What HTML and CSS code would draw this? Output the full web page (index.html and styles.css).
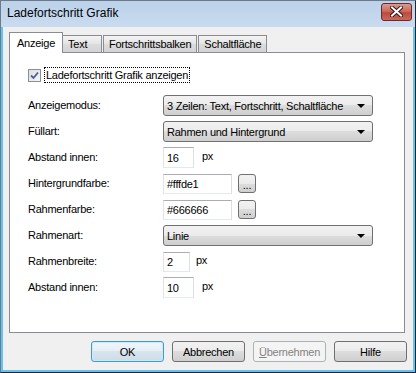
FILE: index.html
```html
<!DOCTYPE html>
<html lang="de">
  <head>
    <meta charset="UTF-8" />
    <title>Ladefortschritt Grafik</title>
    <link rel="stylesheet" href="styles.css">
  </head>
  <body>
    <div class="window">
      <!-- Title bar -->
      <div class="titlebar">
        <span class="title">Ladefortschritt Grafik</span>
        <div class="close-btn">
          <svg width="13" height="11" viewBox="0 0 13 11">
            <path d="M2 1.5 L11 9.5 M11 1.5 L2 9.5" stroke="#3b1518" stroke-width="4" stroke-linecap="square" />
            <path d="M2 1.5 L11 9.5 M11 1.5 L2 9.5" stroke="#ffffff" stroke-width="2" stroke-linecap="square" />
          </svg>
        </div>
      </div>

      <div class="frame">
        <div class="client">
          <div class="tabs">
            <div class="tab active">Anzeige</div>
            <div class="tab tab-short">Text</div>
            <div class="tab">Fortschrittsbalken</div>
            <div class="tab">Schaltfläche</div>
          </div>

          <div class="panel">
            <div class="check-row">
              <span class="checkbox">
                <svg width="9" height="9" viewBox="0 0 9 9">
                  <path d="M1 4.5 L3.5 7 L8 1.5" fill="none" stroke="#4a5f97" stroke-width="1.8" />
                </svg>
              </span>
              <span class="focus-label">Ladefortschritt Grafik anzeigen</span>
            </div>

            <div class="form">
              <label>Anzeigemodus:</label>
              <div class="combo">3 Zeilen: Text, Fortschritt, Schaltfläche<span class="arrow"></span></div>

              <label>Füllart:</label>
              <div class="combo">Rahmen und Hintergrund<span class="arrow"></span></div>

              <label>Abstand innen:</label>
              <div class="field">
                <div class="textbox num">16</div>
                <span class="unit">px</span>
              </div>

              <label>Hintergrundfarbe:</label>
              <div class="field">
                <div class="textbox color">#fffde1</div>
                <div class="dots-btn">...</div>
              </div>

              <label>Rahmenfarbe:</label>
              <div class="field">
                <div class="textbox color">#666666</div>
                <div class="dots-btn">...</div>
              </div>

              <label>Rahmenart:</label>
              <div class="combo">Linie<span class="arrow"></span></div>

              <label>Rahmenbreite:</label>
              <div class="field">
                <div class="textbox small">2</div>
                <span class="unit">px</span>
              </div>

              <label>Abstand innen:</label>
              <div class="field">
                <div class="textbox num">10</div>
                <span class="unit">px</span>
              </div>
            </div>
          </div>

          <!-- Dialog buttons -->
          <div class="buttons">
            <div class="btn default">OK</div>
            <div class="btn">Abbrechen</div>
            <div class="btn disabled"><u>Ü</u>bernehmen</div>
            <div class="btn">Hilfe</div>
          </div>
        </div>
      </div>
    </div>
  </body>
</html>
```

FILE: styles.css
```css
/* General styles */
html,
body {
  margin: 0;
  padding: 0;
  background: #ffffff;
  font-family: "Liberation Sans", Arial, sans-serif;
  font-size: 11px;
  letter-spacing: -0.25px;
  color: #000;
}

/* Window frame */
.window {
  width: 416px;
  height: 373px;
  box-sizing: border-box;
  border: 1px solid #1f2833;
  border-top-color: #6d7a8a;
  border-left-color: #6d7a8a;
  display: flex;
  flex-direction: column;
}
.titlebar {
  height: 26px;
  flex-shrink: 0;
  background: linear-gradient(#bcd2ea, #c9dbef);
  display: flex;
  align-items: center;
  justify-content: space-between;
  padding: 0 3px 0 6px;
}
.title {
  font-size: 12px;
  letter-spacing: 0;
  margin-top: -2px;
}
.close-btn {
  width: 29px;
  height: 16px;
  margin-top: -5px;
  border: 1px solid #6b2a2f;
  border-radius: 3px;
  background: linear-gradient(#dc9a8c, #cc6b5c 45%, #bd4a3c 55%, #c9695a);
  display: flex;
  align-items: center;
  justify-content: center;
}
.frame {
  flex: 1;
  background: #63c2ee;
  padding: 0 2px 2px 2px;
  display: flex;
}
.client {
  flex: 1;
  background: #f0f0f0;
  padding: 5px 6px 7px 6px;
  display: flex;
  flex-direction: column;
}

/* Tabs */
.tabs {
  display: flex;
  align-items: flex-end;
  height: 20px;
  position: relative;
  z-index: 1;
}
.tab {
  height: 17px;
  box-sizing: border-box;
  padding: 1px 5px 0 5px;
  line-height: 14px;
  border: 1px solid #898c95;
  border-bottom: none;
  background: linear-gradient(#f4f4f4, #e4e4e4 50%, #dcdcdc 50%, #d4d4d4);
  margin-left: 1px;
}
.tab-short {
  min-width: 40px;
  margin-left: -1px;
}
.tab.active {
  height: 21px;
  margin-bottom: -1px;
  margin-left: 0;
  padding: 3px 7px 0 7px;
  background: #ffffff;
  position: relative;
  z-index: 2;
}

/* Panel */
.panel {
  height: 281px;
  box-sizing: border-box;
  margin-right: 2px;
  border: 1px solid #898c95;
  background: #ffffff;
  padding: 14px 18px 0 18px;
}
.check-row {
  display: flex;
  align-items: center;
  height: 16px;
}
.checkbox {
  width: 11px;
  height: 11px;
  border: 1px solid #8f8f8f;
  background: linear-gradient(135deg, #dcdfe4, #f4f5f7);
  display: flex;
  align-items: center;
  justify-content: center;
  margin-right: 3px;
}
.focus-label {
  border: 1px dotted #000;
  padding: 0 1px;
  line-height: 14px;
}
.form {
  margin-top: 12px;
  display: grid;
  grid-template-columns: 135px 210px;
  grid-auto-rows: 21px;
  row-gap: 5px;
  align-items: center;
}
.form label {
  margin-top: -2px;
}

/* Controls */
.combo {
  height: 21px;
  box-sizing: border-box;
  border: 1px solid #707070;
  border-radius: 3px;
  background: linear-gradient(#f2f2f2, #ebebeb 50%, #dddddd 50%, #cfcfcf);
  padding-left: 3px;
  display: flex;
  align-items: center;
  justify-content: space-between;
}
.arrow {
  width: 0;
  height: 0;
  border-left: 4px solid transparent;
  border-right: 4px solid transparent;
  border-top: 4px solid #000;
  margin-right: 7px;
}
.field {
  display: flex;
  align-items: center;
}
.textbox {
  height: 21px;
  box-sizing: border-box;
  border: 1px solid;
  border-color: #abadb3 #dbdfe6 #e3e9ef #e2e3ea;
  background: #ffffff;
  padding-left: 3px;
  display: flex;
  align-items: center;
}
.textbox.num {
  width: 31px;
}
.textbox.small {
  width: 27px;
  height: 20px;
}
.textbox.color {
  width: 69px;
  height: 20px;
}
.unit {
  margin-left: 8px;
  margin-top: -3px;
}
.textbox.small + .unit {
  margin-left: 6px;
}
.dots-btn {
  width: 18px;
  height: 19px;
  box-sizing: border-box;
  margin-left: 6px;
  border: 1px solid #707070;
  border-radius: 3px;
  background: linear-gradient(#f2f2f2, #ebebeb 50%, #dddddd 50%, #cfcfcf);
  text-align: center;
  line-height: 20px;
}

/* Dialog buttons */
.buttons {
  margin-top: 8px;
  display: flex;
  justify-content: flex-end;
  gap: 8px;
}
.btn {
  width: 73px;
  height: 21px;
  box-sizing: border-box;
  border: 1px solid #707070;
  border-radius: 3px;
  background: linear-gradient(#f2f2f2, #ebebeb 50%, #dddddd 50%, #cfcfcf);
  display: flex;
  align-items: center;
  justify-content: center;
}
.btn.default {
  border-color: #3c9be0;
  background: linear-gradient(#f0f6fa, #e5eef5 50%, #d8e5ee 50%, #ccdce8);
  box-shadow: inset 0 0 0 1px #cfe9fb;
}
.btn.disabled {
  border-color: #adb2b5;
  background: #f4f4f4;
  color: #838383;
}
```
